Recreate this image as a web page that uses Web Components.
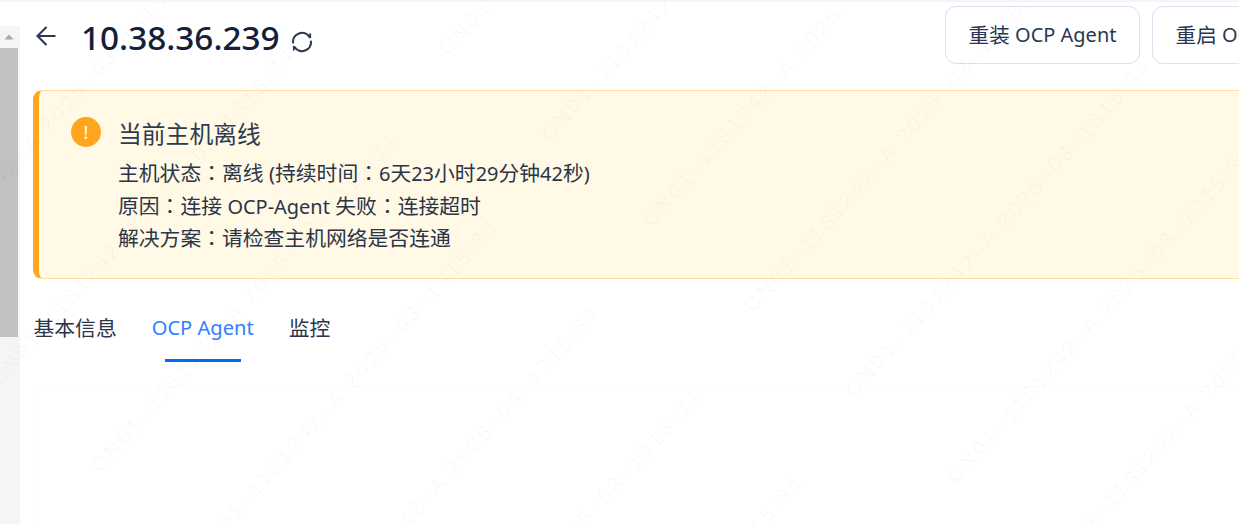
<!doctype html>
<html lang="zh-CN"><head><meta charset="utf-8"><title>Host</title>
<style>html,body{margin:0;height:100%;overflow:hidden;background:#fff}</style></head>
<body><host-page></host-page>
<script>
class HostPage extends HTMLElement{constructor(){super();this.attachShadow({mode:'open'}).innerHTML=`
<style>
:host{display:block;position:relative;width:1239px;height:524px;overflow:hidden;background:#fff;font-family:"Noto Sans","Noto Sans CJK SC",sans-serif;box-sizing:border-box;border-top:2px solid #f2f5fb}
.layout{display:grid;grid-template-columns:20px 13px max-content;height:522px}
.main{grid-column:3;display:flex;flex-direction:column;width:1314px}
.c{font-family:"Noto Sans CJK TC",sans-serif}
.l{font-size:.96em}
p{margin:0;height:32.5px;white-space:nowrap}
</style>
<div class="layout">
<fake-scrollbar></fake-scrollbar>
<div class="main">
<page-header></page-header>
<warn-alert heading="当前主机离线">
<p>主机状态<span class="c" lang="zh-TW">：</span>离线 <span class="l">(</span>持续时间<span class="c" lang="zh-TW">：</span><span class="l">6</span>天<span class="l">23</span>小时<span class="l">29</span>分钟<span class="l">42</span>秒<span class="l">)</span></p>
<p>原因<span class="c" lang="zh-TW">：</span>连接 <span class="l">OCP-Agent</span> 失败<span class="c" lang="zh-TW">：</span>连接超时</p>
<p>解决方案<span class="c" lang="zh-TW">：</span>请检查主机网络是否连通</p>
</warn-alert>
<tab-bar></tab-bar>
<panel-card></panel-card>
</div></div>
<water-mark></water-mark>`}}
class FakeScrollbar extends HTMLElement{constructor(){super();this.attachShadow({mode:'open'}).innerHTML=`
<style>
:host{display:flex;flex-direction:column;margin-top:24px;background:#f5f5f5;width:20px}
.up{height:22px;display:flex;justify-content:center;align-items:center;padding-right:2px;box-sizing:border-box}
.thumb{height:289px;width:18px;background:#c1c1c1}
svg{display:block}
</style>
<div class="up"><svg width="10" height="6" viewBox="0 0 10 6"><path d="M5 0.5 9.5 5.5H.5z" fill="#a9a9a9"/></svg></div>
<div class="thumb"></div>`}}
class PageHeader extends HTMLElement{constructor(){super();this.attachShadow({mode:'open'}).innerHTML=`
<style>
:host{display:flex;align-items:flex-start;height:88px;box-sizing:border-box;padding-top:4px;color:#132039}
.back{margin:18.5px 0 0 2px;width:22px;height:22px;flex:none}
h1{margin:7px 0 0 24px;font:500 33.3px/48px "Noto Sans",sans-serif;color:#132039;white-space:nowrap}
.re{margin:24px 0 0 10px;width:24px;height:24px;flex:none}
.sp{flex:1}
.btns{display:flex;gap:12px;flex:none}
.b{box-sizing:border-box;height:58px;padding-bottom:2px;border:1.5px solid #d9e2ef;border-radius:11px;width:195px;display:flex;align-items:center;justify-content:center;font-size:20.6px;color:#2a3750;white-space:pre;background:#fff}
.l{font-size:.97em}
</style>
<svg class="back" viewBox="0 0 22 22" fill="none" stroke="#2a3750" stroke-width="2.1"><path d="M20.5 11H2.5M11.5 2 2.5 11l9 9"/></svg>
<h1>10.38.36.239</h1>
<svg class="re" viewBox="0 0 24 24" fill="none" stroke="#2a3750" stroke-width="2.1" stroke-linecap="round"><path d="M3 12.5A9 9 0 0 1 19.4 6.8"/><path d="M20.2 4.2v3.2" stroke-width="1.8"/><path d="M21 11.5A9 9 0 0 1 4.6 17.2"/><path d="M3.8 19.8v-3.2" stroke-width="1.8"/></svg>
<div class="sp"></div>
<div class="btns"><div class="b">重装 <span class="l">OCP Agent</span></div><div class="b">重启 <span class="l">OCP Agent</span></div></div>`}}
class WarnAlert extends HTMLElement{constructor(){super();this.attachShadow({mode:'open'}).innerHTML=`
<style>
:host{display:flex;gap:17px;box-sizing:border-box;height:189px;background:#fff9e6;border:1px solid #ffdfa6;border-left:6px solid #ffa81e;border-radius:9px;padding:25px 0 0 32px;color:#2a3548;font-size:20.8px;line-height:32.5px}
.ic{width:30px;height:30px;border-radius:50%;background:#ffa61e;color:#fff;flex:none;display:flex;align-items:center;justify-content:center;font:400 18px/30px "Noto Sans",sans-serif;margin-top:1px}
h2{margin:0 0 4px;font-weight:400;font-size:23.8px;line-height:36px;color:#2f3b50}
</style>
<div class="ic">!</div><div><h2></h2><slot></slot></div>`;this.shadowRoot.querySelector('h2').textContent=this.getAttribute('heading')}}
class TabBar extends HTMLElement{constructor(){super();this.attachShadow({mode:'open'}).innerHTML=`
<style>
:host{display:flex;gap:35px;height:83px;box-sizing:border-box;padding:30px 0 0 .5px;font-size:20.8px;line-height:38px;color:#2a3548}
.t{position:relative;white-space:nowrap}
.on{color:#2f80ff;font-size:20.1px}
.on::after{content:"";position:absolute;left:13px;right:13px;top:50px;height:2.5px;background:#006aff}
</style>
<div class="t">基本信息</div><div class="t on">OCP Agent</div><div class="t">监控</div>`}}
class PanelCard extends HTMLElement{constructor(){super();this.attachShadow({mode:'open'}).innerHTML=`
<style>:host{display:block;flex:1;margin-top:24px;border:1px solid #f8fbff;border-right:0;border-bottom:0;border-radius:14px 0 0 0}</style>`}}
class WaterMark extends HTMLElement{constructor(){super();const T='CN01–1181242–A 2025–03–1315:34';let h='';
const rows=[[-7,381],[443,50]];
for(const [x0,y0] of rows)for(let k=-6;k<=8;k++){const x=x0+k*101.5,y=y0+k*85.5;const ex=x+296,ey=y-324;
if(ex<-20||x>1260||(y<-20&&ey<-20)||ey>540)continue;
h+=`<span style="left:${x}px;top:${y}px">${T}</span>`}
this.attachShadow({mode:'open'}).innerHTML=`
<style>
:host{position:absolute;inset:0;overflow:hidden;pointer-events:none}
span{position:absolute;white-space:pre;font:400 21px/24px "Liberation Sans",sans-serif;letter-spacing:3.4px;color:rgba(0,0,0,.032);transform-origin:0 0;transform:rotate(-48deg) translateY(-12px)}
</style>${h}`}}
customElements.define('fake-scrollbar',FakeScrollbar);
customElements.define('page-header',PageHeader);
customElements.define('warn-alert',WarnAlert);
customElements.define('tab-bar',TabBar);
customElements.define('panel-card',PanelCard);
customElements.define('water-mark',WaterMark);
customElements.define('host-page',HostPage);
</script></body></html>
